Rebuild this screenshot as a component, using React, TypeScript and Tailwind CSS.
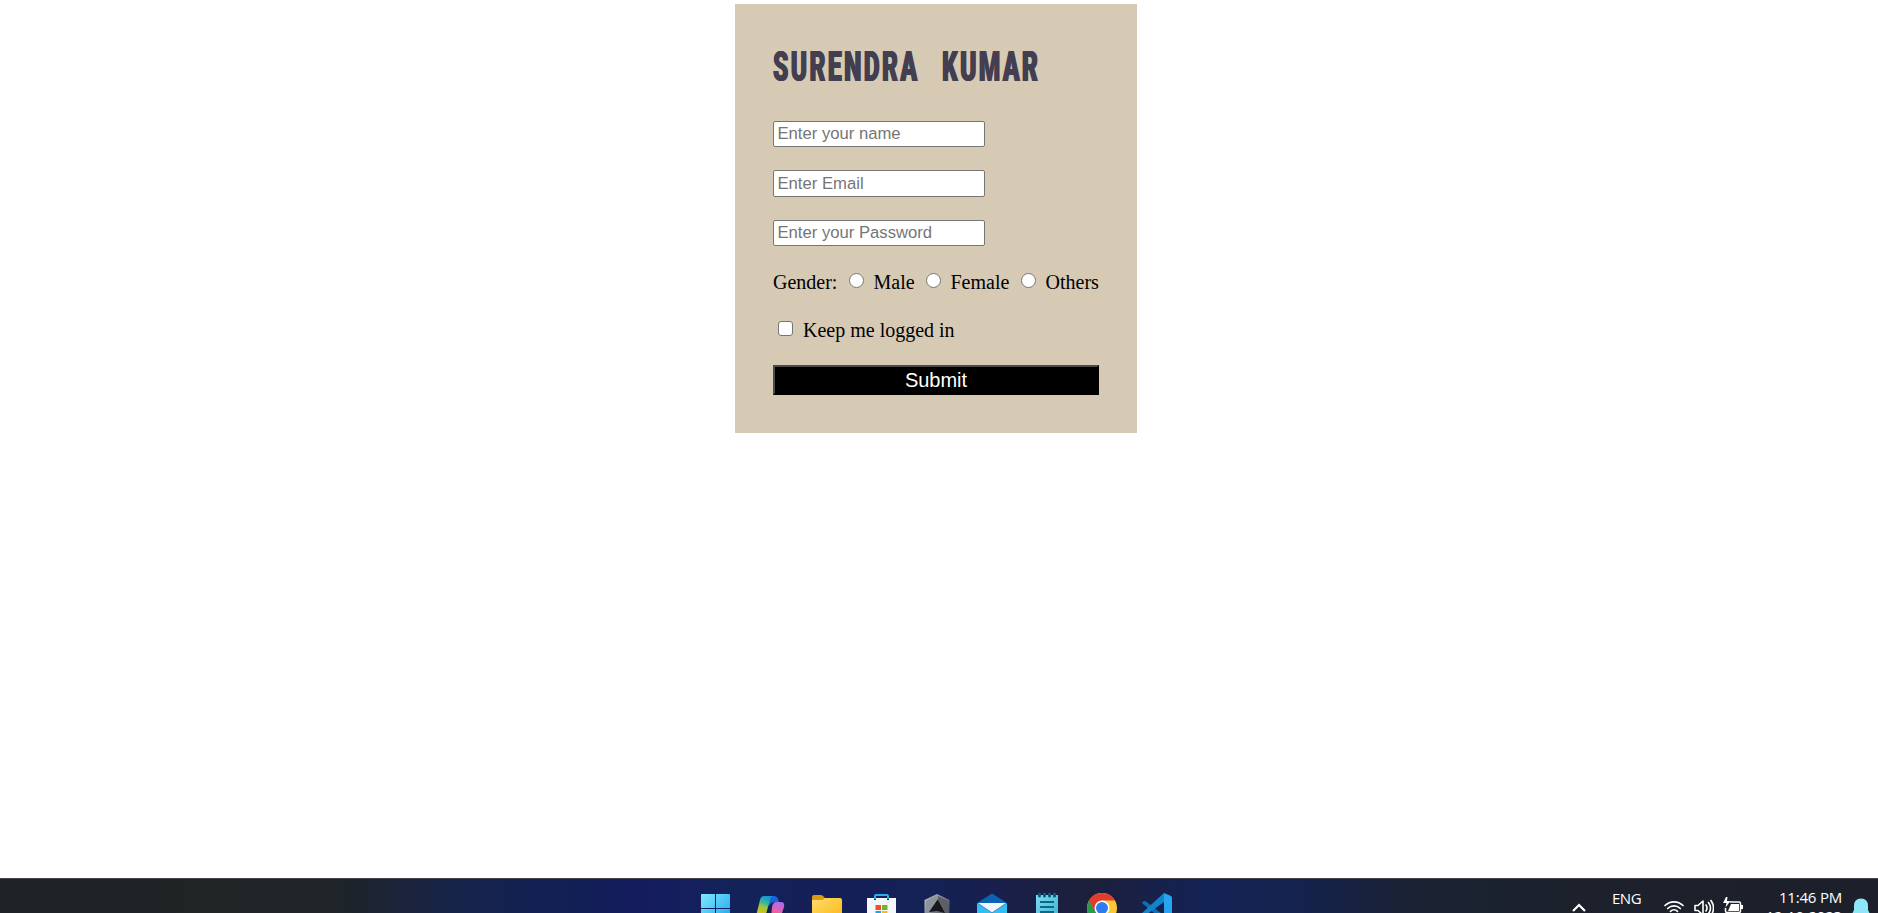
import React from "react";

function Field({ placeholder, type, className }: { placeholder: string; type: string; className: string }) {
  return (
    <input
      type={type}
      placeholder={placeholder}
      className={`block w-[212px] rounded-[2px] border border-[#767676] bg-white px-[3.5px] font-['Liberation_Sans',sans-serif] text-[16.67px] leading-[19px] text-black placeholder:text-[#757575] ${className}`}
    />
  );
}

function Radio({ className }: { className: string }) {
  return (
    <span className={`block size-[15px] shrink-0 rounded-full border border-[#767676] bg-white ${className}`} />
  );
}

function LoginForm() {
  return (
    <form className="h-[429px] w-[402px] bg-[#d7cab4] px-[38px] pt-[41px]">
      <h1 className="flex h-[43px] font-['Roboto',sans-serif] text-[42px] leading-[43px] font-black text-[#433f51] [text-shadow:1px_0_0_#433f51,-1px_0_0_#433f51]">
        <span className="block w-[169px]">
          <span className="inline-block origin-left scale-x-[0.585] tracking-[4.1px]">SURENDRA</span>
        </span>
        <span className="block w-[100px]">
          <span className="inline-block origin-left scale-x-[0.585] tracking-[4px]">KUMAR</span>
        </span>
      </h1>
      <Field type="text" placeholder="Enter your name" className="mt-[33px] h-[26px]" />
      <Field type="email" placeholder="Enter Email" className="mt-[23px] h-[27px]" />
      <Field type="password" placeholder="Enter your Password" className="mt-[23px] h-[26px]" />
      <div className="mt-[24px] flex h-[24px] font-['Liberation_Serif',serif] text-[20px] leading-[25px] text-black">
        <span className="w-[75.5px]">Gender:</span>
        <Radio className="mt-[3px]" />
        <span className="ml-[10px] w-[52px]">Male</span>
        <Radio className="mt-[3px]" />
        <span className="ml-[10px] w-[70px]">Female</span>
        <Radio className="mt-[3px]" />
        <span className="ml-[10px]">Others</span>
      </div>
      <div className="mt-[24px] flex h-[24px] font-['Liberation_Serif',serif] text-[20px] leading-[25px] text-black">
        <span className="mt-[3px] ml-[5px] block size-[15px] rounded-[3px] border border-[#767676] bg-white" />
        <span className="ml-[10px]">Keep me logged in</span>
      </div>
      <button
        type="button"
        className="mt-[23px] block h-[30px] w-[326px] border-2 border-t-[#4c4c4c] border-r-black border-b-black border-l-[#4c4c4c] bg-black font-['Liberation_Sans',sans-serif] text-[20px] leading-[26px] text-white"
      >
        Submit
      </button>
    </form>
  );
}

function Icon({ children }: { children: React.ReactNode }) {
  return (
    <svg viewBox="0 0 32 32" className="block size-[32px] shrink-0">
      {children}
    </svg>
  );
}

function Taskbar() {
  return (
    <footer className="flex h-[35px] overflow-hidden border-t border-[#42444e] bg-[linear-gradient(90deg,#1f2227_0%,#212425_10%,#1f2428_18%,#15234c_25%,#122055_30%,#151c5e_34%,#13235a_39%,#151e58_44%,#132257_49%,#191f4c_53%,#1d1f3b_58%,#132255_64%,#14224e_69%,#1b2334_75%,#1c212b_84%,#1d202b_100%)]">
      <nav className="flex shrink-0 gap-[23px] pt-[13px] pl-[700px]">
        <Icon>
          <defs>
            <linearGradient id="win" x1="0" y1="0" x2="32" y2="32" gradientUnits="userSpaceOnUse">
              <stop offset="0" stopColor="#86ecff" />
              <stop offset="1" stopColor="#129bf0" />
            </linearGradient>
          </defs>
          <path d="M2 2h13v14H1V3q0-1 1-1zM16 2h13q1 0 1 1v13H16zM1 17h14v13H1zM16 17h14v13H16z" fill="url(#win)" />
        </Icon>
        <Icon>
          <defs>
            <linearGradient id="cpA" x1="0.5" y1="0" x2="0.2" y2="1">
              <stop offset="0" stopColor="#1696d8" />
              <stop offset="0.3" stopColor="#34b5a0" />
              <stop offset="0.5" stopColor="#9bc63b" />
              <stop offset="1" stopColor="#e8c21e" />
            </linearGradient>
            <linearGradient id="cpB" x1="0.6" y1="0" x2="0.3" y2="1">
              <stop offset="0" stopColor="#b266f0" />
              <stop offset="0.4" stopColor="#e564a8" />
              <stop offset="1" stopColor="#f4616c" />
            </linearGradient>
          </defs>
          <path d="M11 4h8q3 0 4 3l1 3h-4q-4 0-6 4z" fill="#1567d8" />
          <path d="M9 4h10q-3 0-4 4l-4 14q-1 3-4 3H4q-3 0-2-5L5 8q1-4 4-4z" fill="url(#cpA)" />
          <path d="M21 10h5q4 0 3 5l-4 12q-1 4-4 4h-9q3 0 4-4l1-12q1-5 4-5z" fill="url(#cpB)" />
        </Icon>
        <Icon>
          <defs>
            <linearGradient id="fold" x1="0" y1="0" x2="1" y2="1">
              <stop offset="0" stopColor="#ffdc6c" />
              <stop offset="1" stopColor="#fcb813" />
            </linearGradient>
          </defs>
          <path d="M2 5q0-2 2-2h7q1.500 0 2.500 1.500L16 7v7H2z" fill="#dd9c0c" />
          <path d="M2 8h9.500q1.500 0 2.500-1l1-1h15q2 0 2 2v20H2z" fill="url(#fold)" />
        </Icon>
        <Icon>
          <path d="M10 7V4q0-1 1-1h11q1 0 1 1v3" fill="none" stroke="#25b0ee" strokeWidth="2" />
          <path d="M2 6h7v2h2V6h11v2h2V6h7v20q0 4-4 4H6q-4 0-4-4z" fill="#f5f8fb" />
          <path d="M10.500 13h5.500v5h-5.500z" fill="#f0512a" />
          <path d="M17 13h5.500v5H17z" fill="#78b41c" />
          <path d="M10.500 19h5.500v5h-5.500z" fill="#16a5ee" />
          <path d="M17 19h5.500v5H17z" fill="#fdb913" />
        </Icon>
        <Icon>
          <defs>
            <linearGradient id="cube" x1="0" y1="0" x2="1" y2="1">
              <stop offset="0" stopColor="#c4c8cc" />
              <stop offset="0.6" stopColor="#686d76" />
              <stop offset="1" stopColor="#22252b" />
            </linearGradient>
          </defs>
          <path d="M17 2 29.500 8v16L17 32 4.500 24V8z" fill="url(#cube)" />
          <path d="M17 3.500 6 9v13l4-2 6-11z" fill="#8d939a" />
          <path d="M18 7 25 21l-8-2-8 1z" fill="#17191e" />
          <path d="M18 4v4l7 12 3.500 2V9z" fill="#5b6068" />
        </Icon>
        <Icon>
          <path d="M2 11 17 1.500 32 11v17H2z" fill="#0c63b4" />
          <path d="M2 11l15 10 15-10v18H2z" fill="#35bdf3" />
          <path d="M3 11h28L17 20.500z" fill="#f1f6fc" />
        </Icon>
        <Icon>
          <defs>
            <linearGradient id="note" x1="0" y1="0" x2="1" y2="1">
              <stop offset="0" stopColor="#7ddcf0" />
              <stop offset="1" stopColor="#3fb0cf" />
            </linearGradient>
          </defs>
          <path d="M6 3h22v27H6z" fill="url(#note)" />
          <path d="M10 10h14M10 15h14M10 20h14" stroke="#086a84" strokeWidth="2" />
          <path d="M9.500 2v2M14.500 2v2M19.500 2v2M24.500 2v2" stroke="#0d5c78" strokeWidth="3" strokeLinecap="round" />
        </Icon>
        <Icon>
          <circle cx="17" cy="16" r="15" fill="#fcc934" />
          <path d="M17 16 4 8.500A15 15 0 0 0 17 31l6-11z" fill="#2a9a4b" />
          <path d="M4 8.500A15 15 0 0 1 30 8.500H17L10.500 20z" fill="#e33b2e" />
          <circle cx="17" cy="16" r="7.500" fill="#fff" />
          <circle cx="17" cy="16" r="6" fill="#2f7bee" />
        </Icon>
        <Icon>
          <path d="M2 11q1.500-3 4-1.500L26 25v6z" fill="#0a6fb8" />
          <path d="M24 1v9L6 23q-2 1-4-2z" fill="#1583cc" />
          <path d="M24 1l6 2.500q2 .8 2 2V28l-8 3z" fill="#27a5f0" />
        </Icon>
      </nav>
      <div className="ml-[400px] flex shrink-0 font-['Open_Sans',sans-serif] text-white">
        <svg viewBox="0 0 14 10" className="mt-[23px] block h-[10px] w-[14px]">
          <path d="M1 9 7 3l6 6" fill="none" stroke="#fff" strokeWidth="2.200" />
        </svg>
        <span className="mt-[9px] ml-[26px] block w-[52px] text-[15px] leading-[20px] tracking-[-0.5px]">ENG</span>
        <svg viewBox="0 0 20 20" className="mt-[20px] block size-[20px]">
          <g fill="none" stroke="#fff" strokeWidth="1.700" strokeLinecap="round">
            <path d="M1 6.500a13 13 0 0 1 18 0" />
            <path d="M3.700 9.500a9 9 0 0 1 12.600 0" />
            <path d="M6.500 12.300a5 5 0 0 1 7 0" />
          </g>
          <circle cx="10" cy="15.500" r="1.500" fill="#fff" />
        </svg>
        <svg viewBox="0 0 20 20" className="mt-[19px] ml-[10px] block size-[20px]">
          <g fill="none" stroke="#fff" strokeWidth="1.600" strokeLinecap="round" strokeLinejoin="round">
            <path d="M1 7.500h3L9 3v14l-5-4.500H1z" />
            <path d="M12 7q2 3 0 6M14.500 4.500q4 5.500 0 11M17 2.500q5 7.500 0 15" />
          </g>
        </svg>
        <svg viewBox="0 0 20 20" className="mt-[18px] ml-[9px] block size-[20px]">
          <path d="M7 5h9q1.500 0 1.500 1.500V14q0 1.500-1.500 1.500H4Q2.500 15.500 2.500 14v-3" fill="none" stroke="#fff" strokeWidth="1.500" />
          <path d="M8 7h8v7H5z" fill="#fff" />
          <path d="M18 8h2v4h-2z" fill="#fff" />
          <path d="M3 0h1.500L4 4h3.500L2.500 10.500 3.500 6H0z" fill="#fff" />
        </svg>
        <div className="mt-[8px] ml-[30px] flex w-[69px] flex-col items-end text-[15px] leading-[20px] whitespace-nowrap">
          <div className="tracking-[-0.2px]">11:46 PM</div>
          <div className="leading-[18px] tracking-[-0.2px]">12-10-2023</div>
        </div>
        <svg viewBox="0 0 18 18" className="mt-[19px] ml-[10px] block size-[18px]">
          <path d="M2 8q0-7.500 7-7.500T16 8v4l2 4v2H0v-2l2-4z" fill="#8ee6fb" />
        </svg>
      </div>
    </footer>
  );
}

export default function App() {
  return (
    <div className="flex h-[913px] w-[1878px] flex-col overflow-hidden bg-white">
      <main className="flex h-[878px] shrink-0 pt-[4px] pl-[735px]">
        <LoginForm />
      </main>
      <Taskbar />
    </div>
  );
}
